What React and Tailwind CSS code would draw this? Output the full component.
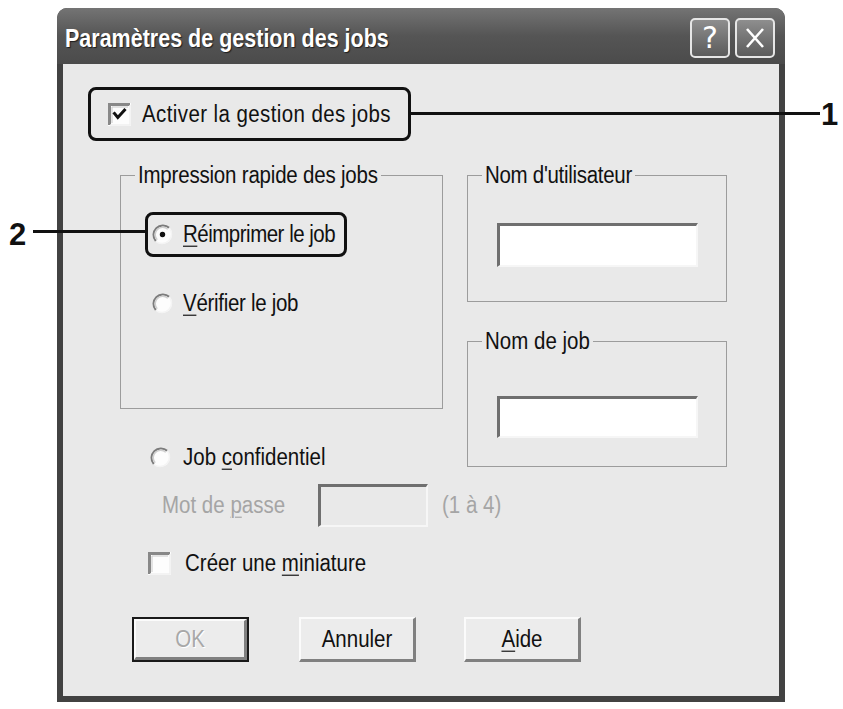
import React from "react";

const FONT = "font-['Liberation_Sans',Arial,sans-serif]";

function Txt({ children, className = "" }) {
  return <span className={"inline-block scale-y-[1.17] whitespace-nowrap " + className}>{children}</span>;
}

function U({ children }) {
  return <span className="underline decoration-1 underline-offset-[3px]">{children}</span>;
}

function Radio({ checked }) {
  return (
    <svg width="21" height="21" viewBox="0 0 21 21" className="shrink-0">
      <circle cx="10.5" cy="10.5" r="9.5" fill="#fdfdfd" />
      <path d="M3.8 17.2 A9.5 9.5 0 0 1 17.2 3.8" stroke="#7c7c7c" strokeWidth="2" fill="none" />
      <path d="M5.2 15.8 A7.5 7.5 0 0 1 15.8 5.2" stroke="#cfcfcf" strokeWidth="1.5" fill="none" />
      <path d="M17.2 3.8 A9.5 9.5 0 0 1 3.8 17.2" stroke="#f4f4f4" strokeWidth="1.5" fill="none" />
      {checked && <circle cx="10.5" cy="10.5" r="2.7" fill="#111" />}
    </svg>
  );
}

function Checkbox({ checked }) {
  return (
    <svg width="23" height="23" viewBox="0 0 23 23" className="shrink-0">
      <rect x="0" y="0" width="23" height="23" fill="#fdfdfd" />
      <path d="M1.5 22 V1.5 H22" stroke="#888" strokeWidth="3" fill="none" />
      <path d="M4 20 V4 H20" stroke="#c9c9c9" strokeWidth="1" fill="none" />
      <path d="M22 2 V22 H2" stroke="#f0f0f0" strokeWidth="1.5" fill="none" />
      {checked && (
        <path d="M6.5 10.5 L9.8 14.5 L16.5 7" stroke="#111" strokeWidth="3" fill="none" strokeLinecap="square" />
      )}
    </svg>
  );
}

function Input({ w, h, disabled }) {
  return (
    <div
      style={{ width: w, height: h }}
      className={
        "shrink-0 border-t-[3px] border-l-[3px] border-r-2 border-b-2 border-t-[#6f6f6f] border-l-[#6f6f6f] border-r-[#f6f6f6] border-b-[#f6f6f6] " +
        (disabled ? "bg-[#e9e9e9]" : "bg-white")
      }
    />
  );
}

function Btn({ children, disabled, isDefault }) {
  const inner = (
    <div className="w-full h-full flex items-center justify-center bg-[#ececec] border-t-2 border-l-2 border-t-[#fbfbfb] border-l-[#fbfbfb] border-r-[3px] border-b-[3px] border-r-[#808080] border-b-[#808080]">
      <Txt className={disabled ? "text-[#a8a8a8] [text-shadow:1px_1px_0_#fff]" : "text-[#111]"}>{children}</Txt>
    </div>
  );
  if (isDefault) {
    return <div className="w-[117px] h-[45px] border-2 border-[#1a1a1a]">{inner}</div>;
  }
  return <div className="w-[117px] h-[45px]">{inner}</div>;
}

export default function App() {
  return (
    <div className={"relative w-[843px] h-[709px] bg-white overflow-hidden pt-[8px] text-[20.5px] text-[#111] " + FONT}>
      {/* Window */}
      <div className="ml-[57px] w-[728px] h-[694px] rounded-t-[10px] bg-[#424242] flex flex-col overflow-hidden">
        {/* Title bar */}
        <div className="h-[56px] shrink-0 flex items-center justify-between pl-[8px] pr-[10px] pt-[4px] bg-linear-to-b from-[#747474] via-[#555555] to-[#4b4b4b]">
          <span className="inline-block scale-y-[1.22] text-white font-bold text-[21.5px] [text-shadow:1px_1px_1px_#1c1c1c] whitespace-nowrap">
            Paramètres de gestion des jobs
          </span>
          <div className="flex gap-[5px]">
            <div className="w-[40px] h-[40px] rounded-[5px] border-2 border-[#e6e6e6] bg-linear-to-b from-[#8e8e8e] to-[#5c5c5c] flex items-center justify-center">
              <span className="text-white text-[30px] leading-none font-['DejaVu_Sans',sans-serif]">?</span>
            </div>
            <div className="w-[40px] h-[40px] rounded-[5px] border-2 border-[#e6e6e6] bg-linear-to-b from-[#8e8e8e] to-[#5c5c5c] flex items-center justify-center">
              <svg width="24" height="24" viewBox="0 0 24 24">
                <path d="M4 3 L20 21 M20 3 L4 21" stroke="#fff" strokeWidth="2.6" />
              </svg>
            </div>
          </div>
        </div>

        {/* Client area */}
        <div className="mx-[6px] h-[632px] bg-[#e9e9e9] pl-[25px] pt-[23px]">
          {/* Enable box (callout 1) */}
          <div className="w-[323px] h-[54px] border-[3px] border-[#111] rounded-[8px] flex items-center pl-[17px] gap-[11px]">
            <Checkbox checked />
            <Txt className="tracking-[0.4px]">Activer la gestion des jobs</Txt>
          </div>

          <div className="flex mt-[22px]">
            {/* Left column */}
            <div className="ml-[32px] w-[323px] shrink-0">
              <fieldset className="h-[246px] border border-[#9c9c9c]">
                <legend className="ml-[14px] px-[3px] leading-[24px]">
                  <Txt className="tracking-[-0.2px]">Impression rapide des jobs</Txt>
                </legend>
                <div className="mt-[25px] ml-[24px] w-[202px] h-[45px] border-[3px] border-[#111] rounded-[8px] flex items-center pl-[4px] gap-[10px]">
                  <Radio checked />
                  <Txt className="tracking-[-0.5px]">
                    <U>R</U>éimprimer le job
                  </Txt>
                </div>
                <div className="mt-[34px] ml-[31px] h-[24px] flex items-center gap-[10px]">
                  <Radio />
                  <Txt className="tracking-[-0.3px]">
                    <U>V</U>érifier le job
                  </Txt>
                </div>
              </fieldset>

              <div className="mt-[36px] ml-[30px] h-[24px] flex items-center gap-[12px]">
                <Radio />
                <Txt>
                  Job <U>c</U>onfidentiel
                </Txt>
              </div>

              <div className="mt-[15px] ml-[42px] h-[43px] flex items-center">
                <div className="w-[156px] shrink-0">
                  <Txt className="text-[#a5a5a5]">
                    Mot de <U>p</U>asse
                  </Txt>
                </div>
                <Input w={110} h={43} disabled />
                <Txt className="ml-[14px] text-[#a5a5a5]">(1 à 4)</Txt>
              </div>

              <div className="mt-[24px] ml-[28px] h-[24px] flex items-center gap-[14px]">
                <Checkbox />
                <Txt>
                  Créer une <U>m</U>iniature
                </Txt>
              </div>
            </div>

            {/* Right column */}
            <div className="ml-[24px] w-[260px] shrink-0">
              <fieldset className="h-[139px] border border-[#9c9c9c]">
                <legend className="ml-[14px] px-[3px] leading-[24px]">
                  <Txt className="tracking-[-0.3px]">Nom d'utilisateur</Txt>
                </legend>
                <div className="mt-[36px] ml-[29px]">
                  <Input w={201} h={44} />
                </div>
              </fieldset>
              <fieldset className="mt-[27px] h-[138px] border border-[#9c9c9c]">
                <legend className="ml-[14px] px-[3px] leading-[24px]">
                  <Txt>Nom de job</Txt>
                </legend>
                <div className="mt-[43px] ml-[29px]">
                  <Input w={201} h={42} />
                </div>
              </fieldset>
            </div>
          </div>

          {/* Buttons */}
          <div className="mt-[42px] ml-[44px] flex">
            <Btn disabled isDefault>
              OK
            </Btn>
            <div className="ml-[50px]">
              <Btn>Annuler</Btn>
            </div>
            <div className="ml-[48px]">
              <Btn>
                <U>A</U>ide
              </Btn>
            </div>
          </div>
        </div>
      </div>

      {/* Callout annotations */}
      <div className="absolute left-[410px] top-[112px] w-[410px] h-[3px] bg-[#111]" />
      <div className="absolute left-[821px] top-[99px] text-[31px] leading-none font-bold text-[#111]">1</div>
      <div className="absolute left-[33px] top-[230px] w-[112px] h-[3px] bg-[#111]" />
      <div className="absolute left-[9px] top-[219px] text-[31px] leading-none font-bold text-[#111]">2</div>
    </div>
  );
}
